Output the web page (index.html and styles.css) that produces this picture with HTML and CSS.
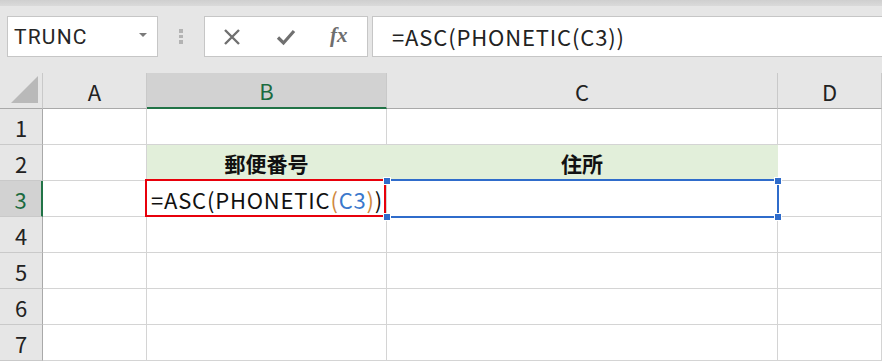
FILE: index.html
```html
<!DOCTYPE html>
<html lang="ja">
<head>
<meta charset="utf-8">
<title>Excel</title>
<link rel="stylesheet" href="styles.css">
</head>
<body>
<div class="topstrip"></div>
<div class="toolbar">
  <div class="namebox">
    <span class="name">TRUNC</span>
    <svg class="dd" width="8" height="4" viewBox="0 0 8 4"><polygon points="0,0 8,0 4,4" fill="#7a7a7a"/></svg>
  </div>
  <div class="grip"><span></span><span></span><span></span></div>
  <div class="buttons">
    <svg class="ico" width="18" height="18" viewBox="0 0 18 18"><path d="M2 2 L16 16 M16 2 L2 16" stroke="#707070" stroke-width="2.4" fill="none"/></svg>
    <svg class="ico" width="20" height="18" viewBox="0 0 20 18"><path d="M2 9.5 L7.5 15 L18 3" stroke="#707070" stroke-width="3.2" fill="none" stroke-linejoin="miter"/></svg>
    <span class="fx">fx</span>
  </div>
  <div class="formula">=ASC(PHONETIC(C3))</div>
</div>
<div class="sheet">
  <div class="h corner"><svg width="30" height="30" viewBox="0 0 30 30"><polygon points="1,28 28,28 28,1" fill="#b9b9b9"/></svg></div>
  <div class="h col">A</div>
  <div class="h col sel">B</div>
  <div class="h col">C</div>
  <div class="h col">D</div>

  <div class="h row">1</div><div class="c"></div><div class="c"></div><div class="c"></div><div class="c"></div>

  <div class="h row">2</div><div class="c"></div><div class="c fill bold">郵便番号</div><div class="c fill bold">住所</div><div class="c"></div>

  <div class="h row rsel">3</div><div class="c"></div>
  <div class="c edit"><span class="ftxt">=ASC(PHONETIC<span class="par">(</span><span class="ref">C3</span><span class="par">)</span>)</span></div>
  <div class="c refcell"><i class="hd tl"></i><i class="hd tr"></i><i class="hd bl"></i><i class="hd br"></i></div>
  <div class="c"></div>

  <div class="h row">4</div><div class="c"></div><div class="c"></div><div class="c"></div><div class="c"></div>
  <div class="h row">5</div><div class="c"></div><div class="c"></div><div class="c"></div><div class="c"></div>
  <div class="h row">6</div><div class="c"></div><div class="c"></div><div class="c"></div><div class="c"></div>
  <div class="h row">7</div><div class="c"></div><div class="c"></div><div class="c"></div><div class="c"></div>
</div>
</body>
</html>
```
FILE: styles.css
```css
* { box-sizing: border-box; }
html, body { margin: 0; padding: 0; }
body {
  width: 882px;
  height: 361px;
  overflow: hidden;
  background: #ffffff;
  font-family: "Noto Sans CJK JP", "Noto Sans", sans-serif;
  color: #111;
}
.topstrip {
  height: 6px;
  background: linear-gradient(#cfcfcf, #dadada);
}
.toolbar {
  height: 67px;
  background: #e6e6e6;
  display: flex;
  align-items: flex-start;
  padding: 10px 0 0 7px;
}
.namebox {
  width: 151px;
  height: 41px;
  background: #fff;
  border: 1px solid #c6c6c6;
  display: flex;
  align-items: center;
  justify-content: space-between;
  padding: 0 10px 0 6px;
}
.name {
  font-family: "Roboto", "Liberation Sans", sans-serif;
  font-size: 21px;
  color: #262626;
  letter-spacing: 1.2px;
}
.dd { margin-top: -3px; }
.grip {
  width: 46px;
  height: 41px;
  display: flex;
  flex-direction: column;
  align-items: center;
  justify-content: center;
  gap: 2px;
}
.grip span {
  width: 4px;
  height: 3.5px;
  background: #b3b3b3;
}
.buttons {
  width: 164px;
  height: 41px;
  background: #fff;
  border: 1px solid #c6c6c6;
  display: flex;
  align-items: center;
  padding-left: 18px;
  gap: 0;
}
.buttons .ico:nth-child(1) { margin-right: 35px; }
.buttons .ico:nth-child(2) { margin-right: 34px; }
.fx {
  font-family: "Liberation Serif", serif;
  font-style: italic;
  font-weight: bold;
  font-size: 21px;
  color: #6e6e6e;
  margin-top: -2px;
}
.formula {
  flex: 1;
  height: 41px;
  margin-left: 4px;
  background: #fff;
  border: 1px solid #c6c6c6;
  border-right: none;
  padding-left: 19px;
  font-size: 22px;
  line-height: 38px;
  color: #222;
  letter-spacing: 0.85px;
}
.sheet {
  display: grid;
  grid-template-columns: 43px 104px 240px 391px 104px;
  grid-auto-rows: 36px;
}
.h {
  background: #e6e6e6;
  display: flex;
  align-items: center;
  justify-content: center;
  font-size: 22px;
  color: #222;
}
.col {
  border-right: 1px solid #c9c9c9;
  border-bottom: 1px solid #a9a9a9;
}
.col.sel {
  background: #d2d2d2;
  color: #1b6b40;
  border-bottom: 2px solid #217346;
}
.corner {
  border-right: 1px solid #c9c9c9;
  border-bottom: 1px solid #a9a9a9;
  justify-content: flex-end;
  align-items: flex-end;
  padding: 0 2px 3px 0;
}
.corner svg { display: block; }
.row {
  border-right: 1px solid #a9a9a9;
  border-bottom: 1px solid #c9c9c9;
}
.row.rsel {
  background: #d2d2d2;
  color: #1b6b40;
  border-right: 2px solid #217346;
}
.c {
  border-right: 1px solid #d4d4d4;
  border-bottom: 1px solid #d4d4d4;
  display: flex;
  align-items: center;
  justify-content: center;
  font-size: 21px;
  position: relative;
}
.fill {
  background: #e2efda;
  border-right-color: #e2efda;
}
.fill.bold { font-weight: bold; color: #111; }
.edit {
  justify-content: flex-start;
  padding-left: 4px;
  overflow: visible;
}
.edit::after {
  content: "";
  position: absolute;
  top: -2px; left: -2px; right: 0; bottom: -1px;
  border: 2.5px solid #e8000b;
  pointer-events: none;
}
.ftxt { white-space: nowrap; color: #111; position: relative; z-index: 1; font-size: 22px; letter-spacing: 0.8px; }
.par { color: #d0883e; }
.ref { color: #3a78cc; }
.refcell::after {
  content: "";
  position: absolute;
  top: -2px; left: 0; right: -2px; bottom: -2px;
  border: 2.5px solid #2f6ccb;
  border-left: none;
  pointer-events: none;
}
.hd {
  position: absolute;
  width: 6px;
  height: 6px;
  background: #2f6ccb;
  outline: 1px solid #fff;
  z-index: 2;
}
.tl { top: -3px; left: -3px; }
.tr { top: -3px; right: -4px; }
.bl { bottom: -4px; left: -3px; }
.br { bottom: -4px; right: -4px; }
```
